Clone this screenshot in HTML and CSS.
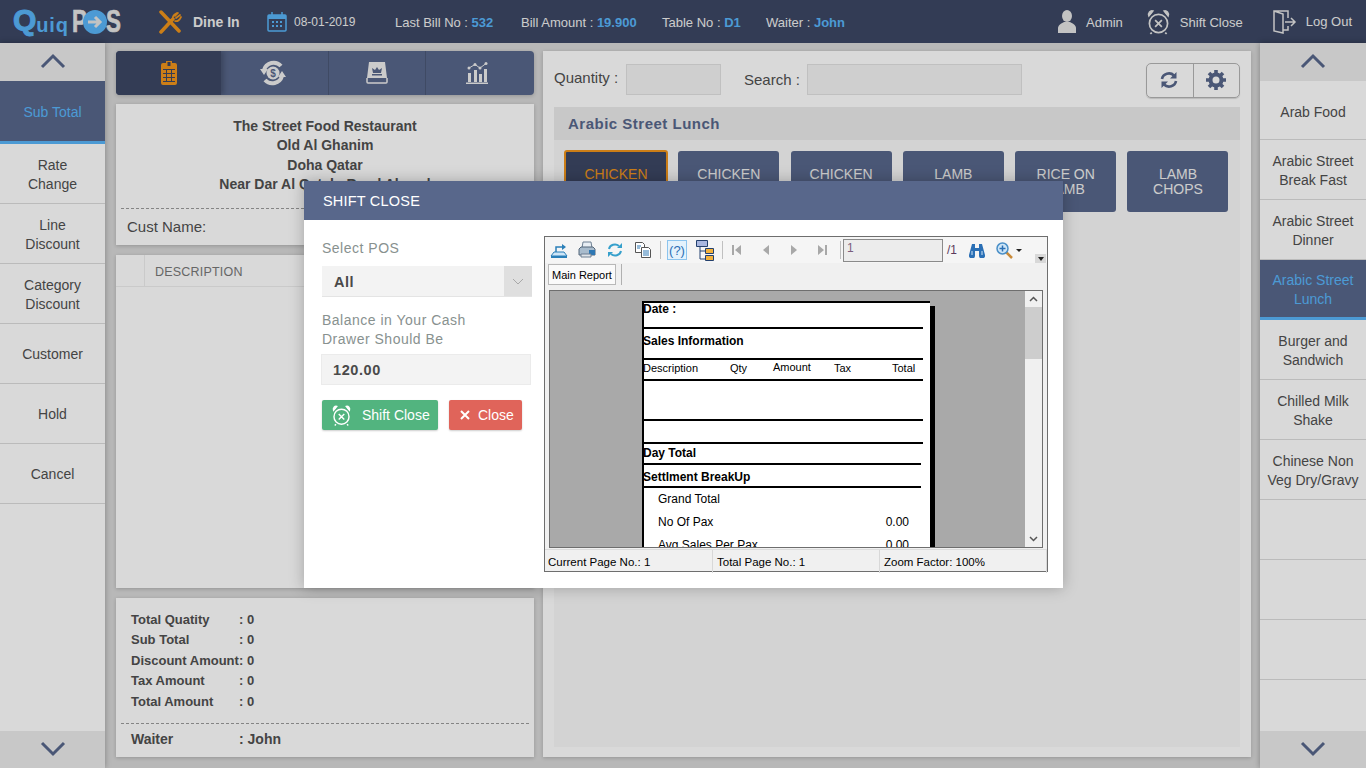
FILE: index.html
```html
<!DOCTYPE html>
<html lang="en">
<head>
  <meta charset="UTF-8" />
  <meta name="viewport" content="width=device-width, initial-scale=1.0"/>
  <title>QuiqPOS - Shift Close</title>
  <link rel="stylesheet" href="styles.css">
</head>
<body>
  <svg class="defs" width="0" height="0">
    <symbol id="alarm" viewBox="0 0 24 26">
      <g fill="none" stroke="currentColor" stroke-width="1.800">
        <circle cx="12" cy="14.500" r="9.500"/>
        <path d="M8.500 11 15.500 18M15.500 11 8.500 18M5 24l-1.500 1.500M19 24l1.500 1.500M5 2.500 2 5.500M19 2.500l3 3"/>
        <path d="M2 6.500C1 3.500 3.500 .8 6 1.500zM22 6.500c1-3-1.500-5.700-4-5z"/>
      </g>
    </symbol>
  </svg>

  <header class="topbar">
    <div class="logo">
      <span class="logo-q">Q</span><span class="logo-uiq">uiq</span><span class="logo-pos">P</span>
      <svg class="logo-o" width="24" height="24" viewBox="0 0 24 24"><circle cx="12" cy="12" r="12" fill="#5ab6fa"/><path d="M5 12h10M12 7l5 5-5 5" fill="none" stroke="#e6e6e6" stroke-width="3"/></svg>
      <span class="logo-pos">S</span>
    </div>
    <svg class="ic-dine" width="24" height="24" viewBox="0 0 24 24"><g fill="none" stroke="#f0951c" stroke-linecap="round"><path d="M3 2 21 21M3 22 15 9" stroke-width="3.500"/><path d="M15 9c-1-3 2-5 4-6M17 11c3 1 5-2 6-4M17 6l3-3M18 8l4-3" stroke-width="1.700"/></g></svg>
    <b class="dine">Dine In</b>
    <svg class="ic-cal" width="20" height="20" viewBox="0 0 20 20"><g fill="none" stroke="#5ab6fa" stroke-width="1.500"><rect x="1" y="3" width="18" height="16" rx="1"/><path d="M5 0v5M15 0v5"/></g><path fill="#5ab6fa" d="M1 3h18v4H1zM5 9h2v2H5zM9 9h2v2H9zM13 9h2v2h-2zM5 13h2v2H5zM9 13h2v2H9zM13 13h2v2h-2z"/></svg>
    <span class="date">08-01-2019</span>
    <span class="meta meta-bill">Last Bill No : <b>532</b></span>
    <span class="meta meta-amt">Bill Amount : <b>19.900</b></span>
    <span class="meta meta-table">Table No : <b>D1</b></span>
    <span class="meta meta-waiter">Waiter : <b>John</b></span>
    <div class="top-actions">
      <svg class="ic-admin" width="18" height="23" viewBox="0 0 18 23"><ellipse cx="9" cy="6" rx="5" ry="6" fill="#e6e6e6"/><path fill="#e6e6e6" d="M0 23v-5c0-3 4-5 6-6h6c2 1 6 3 6 6v5z"/></svg>
      <span class="act act-admin">Admin</span>
      <svg class="ic-alarm" width="23" height="26"><use href="#alarm"/></svg>
      <span class="act act-shift">Shift Close</span>
      <svg class="ic-logout" width="24" height="24" viewBox="0 0 24 24"><g fill="none" stroke="#e6e6e6" stroke-width="1.500"><path d="M15 8V1H1v20l9 2V4L1 1M10 20h5v-4M12 12h9M18 8l4 4-4 4"/></g></svg>
      <span class="act act-logout">Log Out</span>
    </div>
  </header>

  <div class="main">
    <aside class="side side-left">
      <button class="side-arrow"><svg width="26" height="16" viewBox="0 0 26 16"><path d="M2 14 13 3l11 11" fill="none" stroke="#58678b" stroke-width="3"/></svg></button>
      <div class="side-btn side-active side-first">Sub Total</div>
      <div class="side-btn">Rate<br>Change</div>
      <div class="side-btn">Line<br>Discount</div>
      <div class="side-btn">Category<br>Discount</div>
      <div class="side-btn">Customer</div>
      <div class="side-btn">Hold</div>
      <div class="side-btn">Cancel</div>
      <div class="side-fill"></div>
      <button class="side-arrow side-down"><svg width="26" height="16" viewBox="0 0 26 16"><path d="M2 2l11 11L24 2" fill="none" stroke="#58678b" stroke-width="3"/></svg></button>
    </aside>

    <section class="order-col">
      <nav class="tabs">
        <div class="tab tab-active">
          <svg width="16" height="24" viewBox="0 0 16 24"><path fill="#f0951c" d="M2 2h3V0h6v2h3a2 2 0 0 1 2 2v18a2 2 0 0 1-2 2H2a2 2 0 0 1-2-2V4a2 2 0 0 1 2-2z"/><path fill="#3c4764" d="M6.500 1h3v4h-3zM2 8h12v1H2zM2 12h12v1H2zM2 16h12v1H2zM2 20h12v1H2zM5 9h1v12H5zM10 9h1v12h-1z"/></svg>
        </div>
        <div class="tab tab-2">
          <svg width="26" height="26" viewBox="0 0 26 26"><g fill="none" stroke="#efefef" stroke-width="4"><path d="M4 10A10 10 0 0 1 21 6M22 16A10 10 0 0 1 5 20"/></g><path fill="#efefef" d="M0 9h8l-4 6zM26 17h-8l4-6z"/><circle cx="13" cy="13" r="6.500" fill="#efefef"/><text x="13" y="16.500" class="dollar">$</text></svg>
        </div>
        <div class="tab tab-3">
          <svg width="22" height="22" viewBox="0 0 22 22"><path fill="#efefef" d="M3 0h16l2 16H1z"/><path fill="#58678b" d="M6 6l3 2 2-3 2 3 3-2-1 5H7zM6 12h10v1.500H6z"/><path fill="none" stroke="#efefef" stroke-width="1.500" d="M1 16v4a1 1 0 0 0 1 1h18a1 1 0 0 0 1-1v-4"/></svg>
        </div>
        <div class="tab tab-4">
          <svg width="22" height="22" viewBox="0 0 22 22"><g fill="#efefef"><path d="M0 20.500h22V22H0zM2 11h3v9H2zM8 8h3v12H8zM13 12h3v8h-3zM18 7h3v13h-3z"/><circle cx="3" cy="6" r="1.500"/><circle cx="9" cy="2.500" r="1.500"/><circle cx="14" cy="6" r="1.500"/><circle cx="20" cy="1.500" r="1.500"/></g><path fill="none" stroke="#efefef" d="M3 6l6-3.500L14 6l6-4.500"/></svg>
        </div>
      </nav>

      <div class="panel receipt">
        <div class="shop">
          The Street Food Restaurant<br>Old Al Ghanim<br>Doha Qatar<br>Near Dar Al Qatab, Road Alsaad
        </div>
        <div class="dash"></div>
        <div class="cust">Cust Name:</div>
      </div>

      <div class="panel items">
        <div class="items-head"><span class="items-no"></span><span class="items-desc">DESCRIPTION</span></div>
      </div>

      <div class="panel totals">
        <dl class="totals-grid">
          <dt>Total Quatity</dt><dd>: 0</dd>
          <dt>Sub Total</dt><dd>: 0</dd>
          <dt>Discount Amount</dt><dd>: 0</dd>
          <dt>Tax Amount</dt><dd>: 0</dd>
          <dt>Total Amount</dt><dd>: 0</dd>
        </dl>
        <div class="dash"></div>
        <div class="waiter-row"><span>Waiter</span><span>: John</span></div>
      </div>
    </section>

    <section class="panel menu-col">
      <div class="menu-tools">
        <label class="qty-label">Quantity :</label>
        <div class="fake-input qty-input"></div>
        <label class="search-label">Search :</label>
        <div class="fake-input search-input"></div>
        <div class="btn-group">
          <button>
            <svg width="18" height="18" viewBox="0 0 18 18"><g fill="none" stroke="#58678b" stroke-width="2.600"><path d="M2 8a7 6.500 0 0 1 12-3.500M16 10a7 6.500 0 0 1-12 3.500"/></g><path fill="#58678b" d="M16.500 1v6.500H10zM1.500 17v-6.500H8z"/></svg>
          </button>
          <button>
            <svg width="20" height="20" viewBox="0 0 20 20"><circle cx="10" cy="10" r="5.500" fill="none" stroke="#58678b" stroke-width="4"/><path fill="none" stroke="#58678b" stroke-width="3.600" d="M10 0v4M10 16v4M0 10h4M16 10h4M3 3l2.800 2.800M14.200 14.200 17 17M17 3l-2.800 2.800M5.800 14.200 3 17"/></svg>
          </button>
        </div>
      </div>
      <div class="menu-area">
        <h2 class="cat-title">Arabic Street Lunch</h2>
        <div class="products">
          <div class="product product-active">CHICKEN</div>
          <div class="product">CHICKEN</div>
          <div class="product">CHICKEN</div>
          <div class="product">LAMB</div>
          <div class="product">RICE ON<br>LAMB</div>
          <div class="product">LAMB<br>CHOPS</div>
        </div>
      </div>
    </section>

    <aside class="side side-right">
      <button class="side-arrow"><svg width="26" height="16" viewBox="0 0 26 16"><path d="M2 14 13 3l11 11" fill="none" stroke="#58678b" stroke-width="3"/></svg></button>
      <div class="side-btn side-top">Arab Food</div>
      <div class="side-btn">Arabic Street<br>Break Fast</div>
      <div class="side-btn">Arabic Street<br>Dinner</div>
      <div class="side-btn side-active">Arabic Street<br>Lunch</div>
      <div class="side-btn">Burger and<br>Sandwich</div>
      <div class="side-btn">Chilled Milk<br>Shake</div>
      <div class="side-btn">Chinese Non<br>Veg Dry/Gravy</div>
      <div class="side-btn"></div>
      <div class="side-btn"></div>
      <div class="side-btn"></div>
      <div class="side-fill"></div>
      <button class="side-arrow side-down"><svg width="26" height="16" viewBox="0 0 26 16"><path d="M2 2l11 11L24 2" fill="none" stroke="#58678b" stroke-width="3"/></svg></button>
    </aside>
  </div>

  <div class="backdrop"></div>

  <div class="modal">
    <div class="modal-head">SHIFT CLOSE</div>
    <div class="modal-body">
      <form class="shift-form">
        <label class="f-label">Select POS</label>
        <div class="f-select"><span>All</span><i><svg width="12" height="7" viewBox="0 0 12 7"><path d="M1 1l5 5 5-5" fill="none" stroke="#a8a8a8"/></svg></i></div>
        <label class="f-label f-label-2">Balance in Your Cash<br>Drawer Should Be</label>
        <div class="f-input">120.00</div>
        <div class="f-buttons">
          <button type="button" class="btn btn-green"><svg width="19" height="21"><use href="#alarm"/></svg>Shift Close</button>
          <button type="button" class="btn btn-red"><svg width="10" height="10" viewBox="0 0 10 10"><path d="M1 1l8 8M9 1 1 9" stroke="#fff" stroke-width="2"/></svg>Close</button>
        </div>
      </form>

      <div class="viewer">
        <div class="vw-toolbar">
          <span class="vw-ic"><svg width="18" height="18" viewBox="0 0 18 18"><path fill="#cfe6f7" stroke="#2a7fb8" d="M1 15l3-4h10l3 4z"/><path fill="#2a7fb8" d="M1 15h16v2H1z"/><path fill="none" stroke="#2a7fb8" stroke-width="1.500" d="M6 11V6h7"/><path fill="#2a7fb8" d="M12 3l4 3-4 3z"/></svg></span>
          <span class="vw-ic"><svg width="18" height="18" viewBox="0 0 18 18"><path fill="#e8eef4" stroke="#6d7f92" d="M5 1h8l1 6H4z"/><path fill="#a9bccd" stroke="#55677a" d="M1 8l2-2h12l2 2v6H1z"/><path fill="#2f78b4" d="M11 9h6v5h-6z"/><path fill="#e0e5ea" stroke="#6d7f92" d="M3 13h10v3H3z"/></svg></span>
          <span class="vw-ic"><svg width="16" height="16" viewBox="0 0 16 16"><g fill="none" stroke="#36a0cc" stroke-width="2"><path d="M2 7a6 5.500 0 0 1 10-3"/><path d="M14 9a6 5.500 0 0 1-10 3"/></g><path fill="#36a0cc" d="M15 1v5h-5zM1 15v-5h5z"/></svg></span>
          <span class="vw-ic"><svg width="18" height="18" viewBox="0 0 18 18"><path fill="#fff" stroke="#555" d="M1.500 1.500h7l2 2v8h-9z"/><path fill="#fff" stroke="#555" d="M7.500 6.500h7l2 2v8h-9z"/><path stroke="#2f78b4" d="M3 5h4M3 7h3M9 10h6M9 12h6M9 14h6"/></svg></span>
          <i class="vw-sep"></i>
          <span class="vw-ic vw-ic-on"><span class="help">(?)</span></span>
          <span class="vw-ic"><svg width="20" height="22" viewBox="0 0 20 22"><path fill="#a9b7e0" stroke="#23406e" d="M1.500 1.500h11v6h-11z"/><path fill="none" stroke="#23406e" d="M5 8v12h5M5 12h5"/><path fill="#f3b13b" stroke="#23406e" d="M10.500 9.500h8v5h-8zM10.500 16.500h8v5h-8z"/></svg></span>
          <i class="vw-sep"></i>
          <span class="vw-ic vw-nav"><svg width="10" height="12" viewBox="0 0 10 12"><path fill="#a8a8a8" d="M0 1h2v10H0zM9 1v10L3 6z"/></svg></span>
          <span class="vw-ic vw-nav"><svg width="8" height="12" viewBox="0 0 8 12"><path fill="#a8a8a8" d="M7 1v10L1 6z"/></svg></span>
          <span class="vw-ic vw-nav"><svg width="8" height="12" viewBox="0 0 8 12"><path fill="#a8a8a8" d="M1 1v10l6-5z"/></svg></span>
          <span class="vw-ic vw-nav"><svg width="10" height="12" viewBox="0 0 10 12"><path fill="#a8a8a8" d="M0 1v10l6-5zM7 1h2v10H7z"/></svg></span>
          <i class="vw-sep"></i>
          <div class="vw-page">1</div>
          <span class="vw-of">/1</span>
          <span class="vw-ic vw-find"><svg width="16" height="15" viewBox="0 0 16 15"><path fill="#2a6fb5" d="M3 1h3v4h4V1h3l3 11a3 3 0 0 1-6 1V8H6v5a3 3 0 0 1-6-1z"/><path stroke="#cfe6f7" d="M3 8v4M13 8v4"/></svg></span>
          <span class="vw-ic vw-zoom"><svg width="17" height="17" viewBox="0 0 17 17"><path stroke="#c98b3a" stroke-width="2.500" d="M10 10l6 6"/><circle cx="6.500" cy="6.500" r="5.500" fill="#cfe6f7" stroke="#4a8fc7" stroke-width="1.500"/><path stroke="#2a6fb5" stroke-width="1.500" d="M3.500 6.500h6M6.500 3.500v6"/></svg></span>
          <i class="vw-caret"></i>
          <span class="vw-more"><i></i></span>
        </div>
        <div class="vw-tabs"><span class="vw-tab">Main Report</span><i class="vw-tab-sep"></i></div>
        <div class="vw-canvas">
          <div class="vw-scroll">
            <div class="sheet">
              <div class="r-row r-bold r-date">Date :</div>
              <div class="r-row r-bold r-sales">Sales Information</div>
              <div class="r-row r-cols">
                <span class="c-desc">Description</span><span class="c-qty">Qty</span><span class="c-amt">Amount</span><span class="c-tax">Tax</span><span class="c-tot">Total</span>
              </div>
              <div class="r-row r-empty"></div>
              <div class="r-row r-empty-2"></div>
              <div class="r-row r-bold r-day">Day Total</div>
              <div class="r-row r-bold r-settle">Settlment BreakUp</div>
              <div class="r-line">Grand Total</div>
              <div class="r-line">No Of Pax<span>0.00</span></div>
              <div class="r-line">Avg Sales Per Pax<span>0.00</span></div>
            </div>
          </div>
          <div class="vw-bar">
            <span class="vw-arrow"><svg width="9" height="6" viewBox="0 0 9 6"><path d="M1 5l3.500-3.500L8 5" fill="none" stroke="#555" stroke-width="1.500"/></svg></span>
            <div class="vw-thumb"></div>
            <span class="vw-arrow vw-arrow-down"><svg width="9" height="6" viewBox="0 0 9 6"><path d="M1 1l3.500 3.500L8 1" fill="none" stroke="#555" stroke-width="1.500"/></svg></span>
          </div>
        </div>
        <div class="vw-status">
          <span class="st-1">Current Page No.: 1</span>
          <span class="st-2">Total Page No.: 1</span>
          <span class="st-3">Zoom Factor: 100%</span>
        </div>
      </div>
    </div>
  </div>
</body>
</html>
```

FILE: styles.css
```css
:root {
  --navy: #3c4764;
  --primary: #58678b;
  --accent: #5ab6fa;
  --orange: #f0951c;
  --page: #d9d9d9;
  --text: #505050;
  --ui-font: 'Liberation Sans', Arial, sans-serif;
}

* {
  box-sizing: border-box;
}

html, body {
  margin: 0;
  height: 768px;
  overflow: hidden;
}

body {
  width: 1366px;
  background: var(--page);
  color: var(--text);
  font-family: var(--ui-font);
  font-size: 14px;
}

.defs {
  display: block;
  height: 0;
}

/* top bar */
.topbar {
  display: flex;
  align-items: center;
  height: 43px;
  padding-left: 13px;
  background: var(--navy);
  color: #f0f0f0;
  font-size: 13px;
}

.logo {
  display: flex;
  align-items: center;
  width: 145px;
  height: 43px;
  font-weight: bold;
}

.logo-q {
  padding-bottom: 3px;
  color: var(--accent);
  font-size: 30px;
  -webkit-text-stroke: 1px var(--accent);
}

.logo-uiq {
  margin-right: 3px;
  padding-top: 8px;
  color: var(--accent);
  font-size: 20px;
  letter-spacing: .8px;
}

.logo-pos {
  color: #e6e6e6;
  font-size: 28px;
  -webkit-text-stroke: .6px #e6e6e6;
  transform: scale(.8, 1.150);
  transform-origin: left center;
}

.logo-o {
  position: relative;
  margin: 0 -1px 0 -7px;
  flex: none;
}

.ic-dine {
  margin-right: 11px;
}

.dine {
  width: 74px;
  padding-top: 1px;
  font-size: 14px;
}

.ic-cal {
  margin-right: 7px;
}

.date {
  width: 101px;
  padding-top: 1px;
  font-size: 12px;
}

.meta {
  padding-top: 1px;
}

.meta b {
  color: var(--accent);
}

.meta-bill {
  width: 126px;
}

.meta-amt {
  width: 141px;
}

.meta-table {
  width: 104px;
}

.top-actions {
  display: flex;
  align-items: center;
  margin-left: auto;
  padding-right: 14px;
}

.ic-admin {
  margin-right: 10px;
}

.act-admin,
.act-shift {
  padding-top: 1px;
}

.act-admin {
  margin-right: 24px;
}

.ic-alarm {
  color: #e6e6e6;
  margin-right: 10px;
}

.act-shift {
  margin-right: 30px;
}

.ic-logout {
  margin-right: 9px;
}

/* layout */
.main {
  display: flex;
  height: 725px;
}

.side {
  display: flex;
  flex-direction: column;
  flex: none;
  background: #fff;
  box-shadow: 0 0 6px rgba(0, 0, 0, .3);
  z-index: 1;
}

.side-left {
  width: 105px;
}

.side-right {
  width: 106px;
  margin-left: 9px;
}

.side-arrow {
  display: flex;
  align-items: center;
  justify-content: center;
  height: 38px;
  flex: none;
  padding: 0 0 2px;
  border: none;
  background: #ececec;
}

.side-down {
  height: 37px;
}

.side-btn {
  display: flex;
  align-items: center;
  justify-content: center;
  height: 60px;
  flex: none;
  padding-top: 2px;
  text-align: center;
  line-height: 19px;
  border-bottom: 1px solid #dcdcdc;
}

.side-first {
  height: 63px;
  padding-top: 3px;
}

.side-top {
  height: 59px;
  padding-top: 4px;
}

.side-active {
  background: var(--primary);
  color: var(--accent);
  border-bottom: 3px solid var(--accent);
}

.side-fill {
  flex: 1;
}

.order-col {
  display: flex;
  flex-direction: column;
  flex: none;
  width: 418px;
  margin: 8px 0 0 11px;
}

.panel {
  background: #fff;
  box-shadow: 0 1px 4px rgba(0, 0, 0, .2);
}

/* order column */
.tabs {
  display: flex;
  height: 44px;
  flex: none;
  background: var(--primary);
  border-radius: 4px;
  overflow: hidden;
  box-shadow: 0 1px 4px rgba(0, 0, 0, .2);
}

.tab {
  display: flex;
  align-items: center;
  justify-content: center;
  border-right: 1px solid #4a5876;
}

.tab-active {
  width: 105px;
  background: var(--navy);
  border-right: none;
  box-shadow: 3px 0 5px rgba(0, 0, 0, .2);
}

.tab-2 {
  width: 108px;
  padding-right: 4px;
}

.tab-3 {
  width: 97px;
}

.tab-4 {
  flex: 1;
  padding-right: 6px;
  border-right: none;
}

.dollar {
  font: bold 10px var(--ui-font);
  fill: #58678b;
  text-anchor: middle;
}

.receipt {
  height: 141px;
  margin-top: 9px;
  padding-top: 13px;
  flex: none;
}

.shop {
  font-weight: bold;
  line-height: 19.400px;
  text-align: center;
}

.dash {
  margin: 0 5px;
  border-top: 1px dashed #9c9c9c;
}

.receipt .dash {
  margin-top: 13px;
}

.cust {
  padding: 9px 11px 0;
  font-size: 15px;
}

.items {
  height: 333px;
  margin-top: 10px;
  flex: none;
}

.items-head {
  display: flex;
  height: 32px;
  border-bottom: 1px solid #eee;
  font-size: 12.500px;
  color: #787878;
}

.items-no {
  width: 29px;
  border-right: 1px solid #eee;
}

.items-desc {
  padding: 10px 0 0 10px;
  letter-spacing: .2px;
}

.totals {
  height: 159px;
  margin-top: 10px;
  padding-top: 11px;
  flex: none;
}

.totals-grid {
  display: grid;
  grid-template-columns: 108px auto;
  grid-auto-rows: 20.500px;
  align-items: center;
  justify-content: start;
  margin: 0 0 11px 15px;
  font-size: 13px;
  font-weight: bold;
}

.totals-grid dt, .totals-grid dd {
  margin: 0;
  white-space: nowrap;
}

.waiter-row {
  display: grid;
  grid-template-columns: 108px auto;
  padding: 7px 0 0 15px;
  font-size: 14px;
  font-weight: bold;
}

/* menu column */
.menu-col {
  width: 708px;
  height: 706px;
  flex: none;
  margin: 8px 0 0 9px;
  padding: 0 11px 10px;
  display: flex;
  flex-direction: column;
}

.menu-tools {
  display: flex;
  align-items: center;
  height: 56px;
  flex: none;
  padding-top: 2px;
}

.qty-label {
  width: 72px;
  padding-bottom: 5px;
  font-size: 15px;
}

.search-label {
  width: 63px;
  margin-left: 23px;
  padding-bottom: 2px;
  font-size: 15px;
}

.fake-input {
  height: 31px;
  margin-top: -2px;
  background: #f4f4f4;
  border: 1px solid #e2e2e2;
}

.qty-input {
  width: 95px;
}

.search-input {
  width: 215px;
}

.btn-group {
  display: flex;
  height: 35px;
  margin-left: auto;
  border: 1px solid #b4b4b4;
  border-radius: 5px;
  box-shadow: 0 1px 1px rgba(0, 0, 0, .15);
}

.btn-group button {
  display: flex;
  align-items: center;
  justify-content: center;
  width: 47px;
  padding: 0 2px 0 0;
  border: none;
  background: transparent;
  border-right: 1px solid #b4b4b4;
}

.btn-group button:last-child {
  width: 45px;
  border-right: none;
}

.menu-area {
  flex: 1;
  background: #f8f8f8;
}

.cat-title {
  height: 33px;
  margin: 0;
  padding-left: 14px;
  background: #ebebeb;
  color: var(--primary);
  font-size: 15px;
  line-height: 33px;
  letter-spacing: .5px;
}

.products {
  display: flex;
  padding: 11px 0 0 10px;
  gap: 11.300px;
}

.product {
  width: 101px;
  height: 61px;
  padding-top: 16px;
  background: var(--primary);
  color: #f0f0f0;
  border-radius: 3px;
  text-align: center;
  line-height: 15px;
}

.product-active {
  width: 104px;
  height: 63px;
  margin: -1px -1px 0 0;
  background: var(--navy);
  border: 2px solid var(--orange);
  color: var(--orange);
  padding-top: 15px;
}

/* shift close dialog */
.backdrop {
  position: absolute;
  inset: 0;
  z-index: 5;
  background: rgba(0, 0, 0, .15);
}

.modal {
  position: absolute;
  left: 304px;
  top: 181px;
  width: 759px;
  height: 407px;
  z-index: 6;
  background: #fff;
  box-shadow: 0 0 14px rgba(0, 0, 0, .25);
}

.modal-head {
  height: 39px;
  padding-left: 19px;
  background: var(--primary);
  color: #fff;
  font-size: 14.500px;
  line-height: 41px;
  letter-spacing: .2px;
}

.modal-body {
  display: flex;
  padding: 16px 15px 0 18px;
}

.shift-form {
  width: 210px;
  flex: none;
}

.f-label {
  display: block;
  padding-top: 3px;
  color: #88918f;
  font-size: 14px;
  line-height: 19px;
  letter-spacing: .5px;
}

.f-label-2 {
  padding-top: 14px;
}

.f-select {
  display: flex;
  justify-content: space-between;
  height: 31px;
  margin-top: 8px;
  padding-left: 12px;
  background: #f3f3f3;
  border-bottom: 1px solid #e4e4e4;
  color: #4a4a4a;
  font-size: 14.500px;
  font-weight: bold;
  line-height: 33px;
  letter-spacing: .5px;
}

.f-select i {
  display: flex;
  align-items: center;
  justify-content: center;
  width: 28px;
  background: #dfdfdf;
}

.f-input {
  width: 210px;
  height: 31px;
  margin: 5px 0 0 -1px;
  padding-left: 11px;
  background: #f3f3f3;
  border: 1px solid #ebebeb;
  color: #4a4a4a;
  font-size: 14.500px;
  font-weight: bold;
  line-height: 31px;
  letter-spacing: .6px;
}

.f-buttons {
  display: flex;
  gap: 11px;
  margin-top: 15px;
}

.btn {
  display: flex;
  align-items: center;
  height: 30px;
  padding: 0;
  border: none;
  border-radius: 2px;
  color: #fff;
  font-family: var(--ui-font);
  font-size: 14px;
  box-shadow: 0 1px 2px rgba(0, 0, 0, .2);
}

.btn-green {
  width: 116px;
  padding-left: 10px;
  background: #52b47f;
  gap: 11px;
}

.btn-red {
  width: 73px;
  padding-left: 11px;
  background: #e0645a;
  gap: 8px;
}

/* report viewer */
.viewer {
  display: flex;
  flex-direction: column;
  width: 504px;
  height: 336px;
  margin-left: 12px;
  flex: none;
  border: 1px solid #6e6e6e;
  background: #f0f0f0;
  color: #000;
  font-size: 12px;
}

.vw-toolbar {
  display: flex;
  align-items: center;
  position: relative;
  height: 26px;
  flex: none;
  background: #f5f5f5;
}

.vw-ic {
  display: flex;
  align-items: center;
  justify-content: center;
  width: 28px;
  height: 24px;
  flex: none;
}

.vw-nav {
  width: 28.500px;
}

.vw-ic-on {
  width: 20px;
  height: 20px;
  margin: 0 4px 0 6px;
  background: #e4f2fc;
  border: 1px solid #8cc4ee;
}

.help {
  color: #2a6fb5;
  font: 13px var(--ui-font);
}

.vw-sep {
  width: 1px;
  height: 18px;
  margin-left: 3px;
  flex: none;
  background: #c0c0c0;
}

.vw-page {
  width: 100px;
  height: 23px;
  margin-left: 2px;
  padding: 1px 0 0 3px;
  flex: none;
  background: #ececec;
  border: 1px solid #8a8a8a;
  color: #7b5d7d;
}

.vw-of {
  margin-left: 4px;
  width: 12px;
  color: #5c3a5c;
}

.vw-find {
  width: 30px;
  margin-left: 3px;
}

.vw-zoom {
  width: 24px;
}

.vw-caret {
  width: 0;
  height: 0;
  border: 3px solid transparent;
  border-top: 3px solid #222;
  border-bottom: none;
}

.vw-more {
  position: absolute;
  right: 1px;
  top: 15px;
  display: flex;
  justify-content: center;
  width: 11px;
  height: 11px;
  background: #d8d8d8;
  border-top: 2px solid #f5f5f5;
}

.vw-more i {
  width: 0;
  height: 0;
  margin-top: 3px;
  border: 3px solid transparent;
  border-top: 4px solid #222;
  border-bottom: none;
}

.vw-tabs {
  display: flex;
  align-items: flex-start;
  height: 27px;
  flex: none;
  padding: 1px 0 0 3px;
}

.vw-tab {
  height: 21px;
  padding: 4px 3px 0;
  background: #fafafa;
  border: 1px solid #b8b8b8;
  font-size: 11px;
  line-height: 13px;
}

.vw-tab-sep {
  width: 1px;
  height: 21px;
  margin-left: 5px;
  background: #b0b0b0;
}

.vw-canvas {
  display: flex;
  height: 258px;
  margin: 0 4px;
  flex: none;
  border: 1px solid #6e6e6e;
  background: #a9a9a9;
}

.vw-scroll {
  flex: 1;
  overflow: hidden;
  padding: 10px 0 0 92px;
}

.sheet {
  width: 288px;
  height: 300px;
  background: #fff;
  border: solid #000;
  border-width: 2px 0 0 2px;
  box-shadow: 5px 5px 0 #000;
  font-size: 12px;
}

.r-row {
  width: 280px;
  border-bottom: 2px solid #000;
  margin-left: -1px;
}

.r-bold {
  font-weight: bold;
}

.r-date {
  height: 26px;
  line-height: 12px;
}

.r-sales {
  height: 31px;
  padding-top: 6px;
  line-height: 13px;
}

.r-cols {
  position: relative;
  height: 21px;
  font-size: 11px;
  line-height: 17px;
}

.r-cols span {
  position: absolute;
  top: 0;
  white-space: nowrap;
}

.r-cols .c-desc { left: 0; }
.r-cols .c-qty { left: 87px; }
.r-cols .c-amt { left: 130px; top: -1px; }
.r-cols .c-tax { left: 191px; }
.r-cols .c-tot { left: 249px; }

.r-empty {
  height: 40px;
}

.r-empty-2 {
  height: 23px;
}

.r-day {
  width: 278px;
  height: 21px;
  line-height: 19px;
}

.r-settle {
  width: 278px;
  height: 23px;
  line-height: 25px;
}

.r-line {
  display: flex;
  justify-content: space-between;
  width: 265px;
  height: 23px;
  padding-left: 14px;
  line-height: 22px;
}

.vw-bar {
  display: flex;
  flex-direction: column;
  width: 17px;
  flex: none;
  background: #f0f0f0;
}

.vw-arrow {
  display: flex;
  align-items: center;
  justify-content: center;
  height: 16px;
  flex: none;
}

.vw-arrow-down {
  margin-top: auto;
}

.vw-thumb {
  height: 52px;
  background: #cdcdcd;
}

.vw-status {
  display: flex;
  height: 24px;
  flex: none;
  margin-top: 1px;
  padding-left: 3px;
  border-top: 1px solid #dcdcdc;
  font-size: 11.500px;
  line-height: 24px;
}

.vw-status span {
  border-right: 1px solid #d8d8d8;
}

.st-1 {
  width: 165px;
}

.st-2 {
  width: 167px;
  padding-left: 4px;
}

.st-3 {
  width: 167px;
  padding-left: 4px;
}
```
